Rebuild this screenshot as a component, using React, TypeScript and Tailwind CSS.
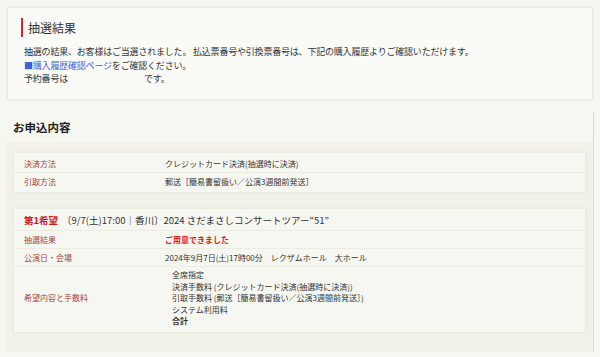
const font = "font-['Noto_Sans_CJK_JP','Noto_Sans',sans-serif]";

function Row({ label, children, last }: { label: string; children: React.ReactNode; last?: boolean }) {
  return (
    <div className={`flex h-full items-center ${last ? "" : "border-b border-[#ecece2]"}`}>
      <div className="w-[150px] shrink-0 pl-[9px] text-[8px] text-[#a8423c]">{label}</div>
      <div className="text-[8px] text-[#333]">{children}</div>
    </div>
  );
}

export default function App() {
  return (
    <div className={`${font} min-h-screen bg-[#f7f7f2] px-[6px] pt-[6px] pb-[8px] text-[#333]`}>
      <section className="h-[95px] rounded-[3px] border-2 border-[#ececE3] bg-[#fafaf7] pl-[13px] pt-[10px]">
        <h2 className="flex h-[19px] items-center border-l-2 border-[#d0262c] pl-[5px] text-[12px] leading-none text-[#333]">抽選結果</h2>
        <div className="mt-[8px] pl-[3px] text-[9px] leading-[13.5px] tracking-[-0.2px]">
          <p>抽選の結果、お客様はご当選されました。 払込票番号や引換票番号は、下記の購入履歴よりご確認いただけます。</p>
          <p>
            <a className="text-[#3c64d8]" href="#">■購入履歴確認ページ</a>をご確認ください。
          </p>
          <p>
            予約番号は<span className="inline-block w-[76px]" />です。
          </p>
        </div>
      </section>

      <section className="mt-[11px] border-r border-[#dcdcd4]">
        <h2 className="flex h-[31px] items-center pl-[7px] text-[11.5px] font-bold text-[#222]">お申込内容</h2>
        <div className="bg-[#f1f1e7] px-[6px] pt-[8px] pb-[18px]">
          <div className="border-2 border-[#ececE1] bg-[#f7f7f1] px-[1px] pt-[2px] pb-[2px]">
            <div className="h-[18px]"><Row label="決済方法">クレジットカード決済(抽選時に決済)</Row></div>
            <div className="h-[17px]"><Row label="引取方法" last>郵送［簡易書留扱い／公演3週間前発送］</Row></div>
          </div>

          <div className="mt-[13px] rounded-[3px] border-2 border-[#ececE1] bg-[#f7f7f1] px-[1px] pt-[1px] pb-[3px]">
            <div className="flex h-[21px] items-center border-b border-[#ecece2] pl-[9px] text-[9.5px]">
              <span className="w-[38px] font-bold text-[#c8201e]">第1希望</span>
              <span className="text-[#333]">〔9/7(土)17:00｜香川〕2024 さだまさしコンサートツアー“51”</span>
            </div>
            <div className="h-[18px]"><Row label="抽選結果"><span className="font-bold text-[#e8141a]">ご用意できました</span></Row></div>
            <div className="h-[18px]"><Row label="公演日・会場">2024年9月7日(土)17時00分　レクザムホール　大ホール</Row></div>
            <div className="flex items-center py-[2px]">
              <div className="w-[150px] shrink-0 pl-[9px] text-[8px] text-[#a8423c]">希望内容と手数料</div>
              <div className="pl-[7px] text-[8px] leading-[11.6px] text-[#333]">
                <p>全席指定</p>
                <p>決済手数料 (クレジットカード決済(抽選時に決済))</p>
                <p>引取手数料 (郵送［簡易書留扱い／公演3週間前発送］)</p>
                <p>システム利用料</p>
                <p className="font-bold">合計</p>
              </div>
            </div>
          </div>
        </div>
      </section>
    </div>
  );
}
